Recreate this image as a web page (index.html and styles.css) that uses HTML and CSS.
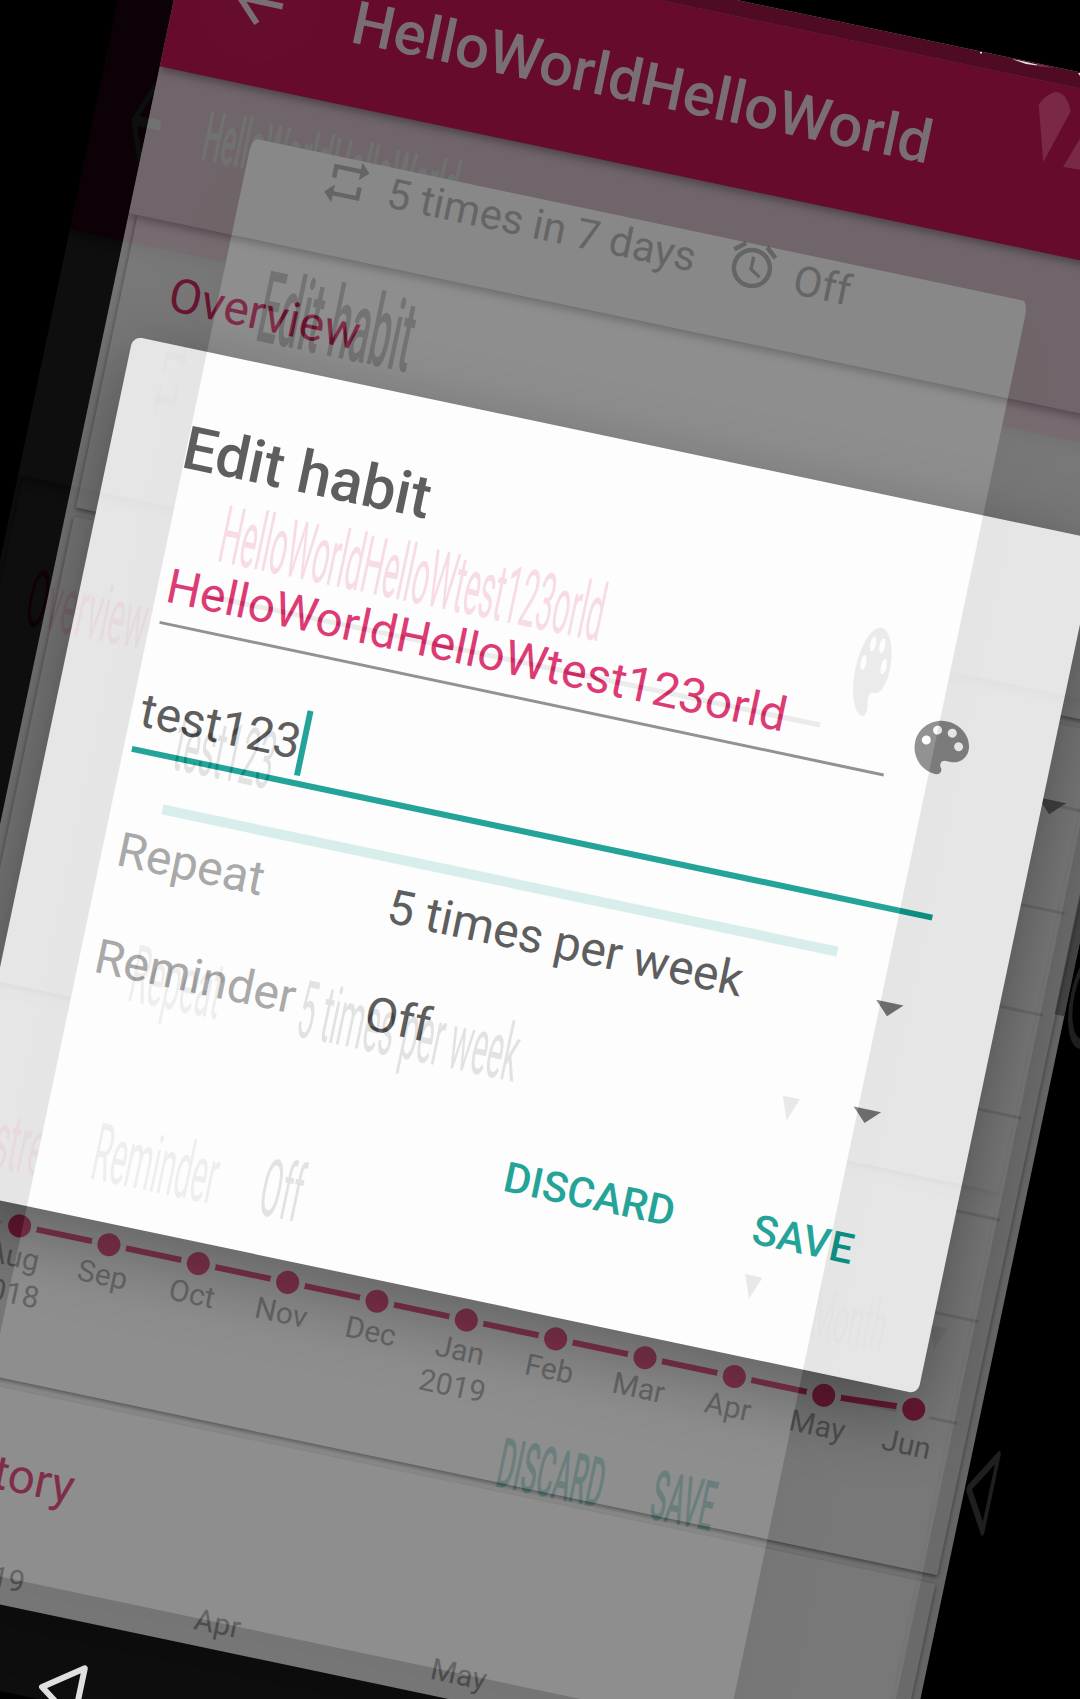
FILE: index.html
```html
<!DOCTYPE html>
<html lang="en">
<head>
<meta charset="utf-8">
<title>Edit habit</title>
<link rel="stylesheet" href="styles.css">
</head>
<body>
<svg class="defs" width="0" height="0" aria-hidden="true">
  <symbol id="back" viewBox="0 0 24 24"><path d="M20 11H7.83l5.59-5.59L12 4l-8 8 8 8 1.41-1.41L7.83 13H20v-2z"/></symbol>
  <symbol id="repeat" viewBox="0 0 24 24"><path d="M7 7h10v3l4-4-4-4v3H5v6h2V7zm10 10H7v-3l-4 4 4 4v-3h12v-6h-2v4z"/></symbol>
  <symbol id="alarm" viewBox="0 0 24 24"><path d="M22 5.72l-4.6-3.86-1.29 1.53 4.6 3.86L22 5.72zM7.88 3.39L6.6 1.86 2 5.71l1.29 1.53 4.59-3.85zM12.5 8H11v6l4.75 2.85.75-1.23-4-2.37V8zM12 4c-4.97 0-9 4.03-9 9s4.02 9 9 9c4.97 0 9-4.03 9-9s-4.03-9-9-9zm0 16c-3.87 0-7-3.13-7-7s3.13-7 7-7 7 3.13 7 7-3.13 7-7 7z"/></symbol>
  <symbol id="palette" viewBox="0 0 24 24"><path d="M12 3c-4.97 0-9 4.03-9 9s4.03 9 9 9c.83 0 1.5-.67 1.5-1.5 0-.39-.15-.74-.39-1.01-.23-.26-.38-.61-.38-.99 0-.83.67-1.5 1.5-1.5H16c2.76 0 5-2.24 5-5 0-4.42-4.03-8-9-8zm-5.5 9c-.83 0-1.5-.67-1.5-1.5S5.67 9 6.5 9 8 9.67 8 10.5 7.33 12 6.5 12zm3-4C8.67 8 8 7.33 8 6.5S8.67 5 9.5 5s1.5.67 1.5 1.5S10.33 8 9.5 8zm5 0c-.83 0-1.5-.67-1.5-1.5S13.67 5 14.5 5s1.5.67 1.5 1.5S15.33 8 14.5 8zm3 4c-.83 0-1.5-.67-1.5-1.5S16.67 9 17.5 9s1.5.67 1.5 1.5-.67 1.5-1.5 1.5z"/></symbol>
</svg>

<main class="stage">
  <section class="screen portrait">
    <div class="statusbar"></div>
    <header class="toolbar">
      <span class="halo"><svg class="i72"><use href="#back"/></svg></span>
      <h1>HelloWorldHelloWorld</h1>
    </header>
    <div class="subheader">
      <svg class="i54"><use href="#repeat"/></svg><span class="freq">5 times in 7 days</span>
      <svg class="i54"><use href="#alarm"/></svg><span>Off</span>
    </div>
    <article class="card overview"><h2>Overview</h2></article>
    <article class="card strength">
      <svg class="chart" width="1062" height="858" viewBox="0 0 1062 858">
        <path class="rule" d="M40 80.500H1051M40 184.500H1051M40 288.500H1051M40 393.500H1051M40 497.500H1051M40 601.500H1051M40 705.500H1051"/>
        <path class="caret" d="M1001 76h29l-14.500 14.500z"/>
        <path class="line" d="M93 705.500L914.700 705.500L1005.700 700"/>
        <g class="dots">
          <circle cx="93" cy="705.500" r="14.500"/><circle cx="184.300" cy="705.500" r="14.500"/><circle cx="275.600" cy="705.500" r="14.500"/><circle cx="366.900" cy="705.500" r="14.500"/><circle cx="458.200" cy="705.500" r="14.500"/><circle cx="549.500" cy="705.500" r="14.500"/><circle cx="640.800" cy="705.500" r="14.500"/><circle cx="732.100" cy="705.500" r="14.500"/><circle cx="823.400" cy="705.500" r="14.500"/><circle cx="914.700" cy="705.500" r="14.500"/><circle cx="1005.700" cy="700.500" r="14.500"/>
        </g>
        <g class="axis">
          <text x="93" y="746.500">Aug</text><text x="93" y="783">2018</text><text x="184.300" y="746.500">Sep</text><text x="275.600" y="746.500">Oct</text><text x="366.900" y="746.500">Nov</text><text x="458.200" y="746.500">Dec</text><text x="549.500" y="746.500">Jan</text><text x="549.500" y="783">2019</text><text x="640.800" y="746.500">Feb</text><text x="732.100" y="746.500">Mar</text><text x="823.400" y="746.500">Apr</text><text x="914.700" y="746.500">May</text><text x="1005.700" y="746.500">Jun</text>
        </g>
      </svg>
    </article>
    <article class="card history">
      <h2>History</h2>
      <div class="months"><span>2019</span><span>Apr</span><span>May</span></div>
      <div class="cells"></div>
    </article>
    <nav class="navbar">
      <svg width="60" height="70" viewBox="0 0 60 70"><path d="M8 35L46 8v54z"/></svg>
    </nav>
    <i class="scrollbar"></i>
  </section>

  <section class="dialog front">
    <h2>Edit habit</h2>
    <div class="name"><span>HelloWorldHelloWtest123orld</span><svg class="i72"><use href="#palette"/></svg></div>
    <div class="note"><span>test123</span><i></i></div>
    <div class="row"><label>Repeat</label><span>5 times per week</span><b></b></div>
    <div class="row"><label>Reminder</label><span>Off</span><b></b></div>
    <footer><span>DISCARD</span><span>SAVE</span></footer>
  </section>

  <svg class="pencil" width="48" height="90" viewBox="0 0 48 90"><path d="M6.700 24.500C15 14 21 12 25 12c7 1 12 9 13.700 19.500L11.300 82zM31 87L49 57v33z"/></svg>
  <svg class="notices" width="120" height="40" viewBox="0 0 120 40"><path d="M52 19l12 2.500 13 3v1l-11-1.500z"/><path class="dim" d="M77 24l17 4-16-2z"/><path d="M20 12h2v1.500h-2zM118 33h2v3z"/></svg>

  <section class="screen landscape">
    <div class="content">
      <header class="toolbar">
        <span class="halo"><svg class="i72"><use href="#back"/></svg></span>
        <h1>HelloWorldHelloWorld</h1>
      </header>
      <div class="subheader"><svg class="i54"><use href="#repeat"/></svg></div>
      <article class="card overview"><h2>Overview</h2></article>
      <article class="card strength"><h2>Habit strength</h2><span class="unit">Month</span><b></b></article>
    </div>
    <nav class="sidebar">
      <svg width="144" height="1080" viewBox="0 0 144 1080"><circle cx="72" cy="540" r="28"/><path d="M44 842L80 819v46z"/></svg>
    </nav>
    <div class="dialog back">
      <h2>Edit habit</h2>
      <div class="name"><span>HelloWorldHelloWtest123orld</span><svg class="i72"><use href="#palette"/></svg></div>
      <div class="note"><span>test123</span></div>
      <div class="row"><label>Repeat</label><span>5 times per week</span><b></b></div>
      <div class="row"><label>Reminder</label><span>Off</span><b></b></div>
      <footer><span>DISCARD</span><span>SAVE</span></footer>
    </div>
  </section>
</main>
</body>
</html>
```

FILE: styles.css
```css
* { box-sizing: border-box; }
body { margin: 0; background: #000; font-family: Roboto, "Liberation Sans", sans-serif; }
h1, h2 { margin: 0; font-weight: 500; }
.defs { position: absolute; }
.stage { position: relative; width: 1080px; height: 1699px; overflow: hidden; background: #000; }
.i72 { width: 72px; height: 72px; flex: none; fill: currentColor; }
.i54 { width: 54px; height: 54px; flex: none; fill: currentColor; }

/* Screens: two orientations overlaid while the device rotates */
.screen { position: absolute; left: 0; top: 0; display: flex; transform-origin: 0 0; overflow: hidden; }
.portrait { width: 1080.5px; height: 1930px; flex-direction: column; background: #777; transform: rotate(11.9deg) translate(170px, -152px); }
.landscape { width: 1920px; height: 1080px; background: #000; opacity: .14; transform: rotate(11.9deg) translate(115.5px, -151px) scale(.626, 1.672); }
.content { width: 1776px; height: 1080px; display: flex; flex-direction: column; overflow: hidden; background: #5c5c5c; }

.statusbar { height: 16px; background: #4e0b23; flex: none; position: relative; z-index: 3; }
.toolbar { display: flex; align-items: center; flex: none; height: 168px; background: #690c2c; color: #808080; box-shadow: 0 3px 10px rgba(0,0,0,.4); z-index: 2; }
.toolbar h1 { font-size: 60px; }
.halo { width: 120px; height: 120px; margin-left: 24px; margin-right: 36px; border-radius: 50%; display: grid; place-items: center; background: rgba(255,255,255,.012); }
.subheader { display: flex; align-items: center; flex: none; height: 150px; padding-left: 180px; font-size: 42px; background: #757575; color: #4c4c4c; box-shadow: 0 3px 10px rgba(0,0,0,.35); z-index: 1; }
.subheader span { margin-left: 16.5px; line-height: 60px; margin-top: 5px; white-space: nowrap; }
.subheader .freq { width: 314px; margin-left: 15px; margin-right: 31px; margin-top: 3px; }
.subheader .freq + svg { margin-top: -5px; }
.card { flex: none; margin: 0 8.5px 9px; background: #7c7c7c; box-shadow: 0 2px 4px rgba(0,0,0,.5); overflow: hidden; }
.card h2 { font-size: 48px; font-weight: 400; line-height: 60px; color: #6b0a2b; margin-left: 48px; }
.overview { height: 299px; padding-top: 41px; }
.strength { height: 858px; display: flex; }
.history { height: 230px; padding-top: 53.5px; margin-bottom: 0; display: flex; flex-direction: column; }
.months { display: flex; font-size: 30px; line-height: 40px; color: #4b4b4b; padding-left: 104.5px; margin-top: 53.5px; }
.months span { width: 241.5px; }
.cells { height: 20px; margin: 9px 6px 0; background: repeating-linear-gradient(90deg, #727272 0 57px, #7c7c7c 57px 60px); }

.chart { display: block; flex: none; }
.rule { stroke: #6b6b6b; stroke-width: 3; fill: none; }
.caret { fill: #3c3c3c; }
.line { stroke: #6b0a2b; stroke-width: 6; fill: none; }
.dots circle { fill: #6b0a2b; stroke: #7c7c7c; stroke-width: 6; }
.axis text { font-size: 30px; text-anchor: middle; fill: #4b4b4b; }

.navbar { position: absolute; left: 0; right: 0; top: 1721.5px; height: 210px; background: #000; padding: 37px 0 0 211px; }
.navbar path { fill: none; stroke: #f5f5f5; stroke-width: 6; stroke-linejoin: round; }
.scrollbar { position: absolute; right: 0; top: 700px; width: 10px; height: 227px; background: rgba(0,0,0,.33); }

/* Dialog */
.dialog { position: absolute; height: 873px; display: flex; flex-direction: column; background: #fdfdfd; color: #444; border-radius: 9px; font-size: 48px; box-shadow: 0 24px 72px rgba(0,0,0,.42); }
.front { --field-end: 161px; --icon-gap: 15px; --label: 91px; --value: 276px; left: 0; top: 0; width: 986px; transform-origin: 0 0; transform: rotate(11.9deg) translate(199.5px, 301.6px); }
.back { --field-end: 186px; --icon-gap: 28px; --label: 87px; --value: 274px; left: 255px; top: 139.5px; width: 1267px; z-index: 4; letter-spacing: -.3px; box-shadow: 0 24px 72px rgba(0,0,0,.2); }
.dialog h2 { font-size: 60px; line-height: 75px; margin: 60px 0 0 72.5px; }
.name { display: flex; align-items: center; height: 78px; margin: 62.5px 0 0 85px; color: #818181; }
.name span { flex: none; width: calc(100% - var(--field-end)); height: 78px; line-height: 78px; color: #d81b60; border-bottom: 3px solid #818181; }
.name svg { margin: -1px 0 0 var(--icon-gap); }
.note { display: flex; align-items: center; height: 86px; line-height: 86px; margin: 45.5px 84px 0 84px; border-bottom: 6px solid #009688; }
.note span { margin: 5px 0 0 1px; }
.note i { width: 6px; height: 66px; margin-top: 4px; background: #009688; }
.row { display: flex; align-items: center; height: 109px; padding: 0 94px 0 var(--label); }
.note + .row { margin-top: 42.5px; }
.row label { width: var(--value); color: #9b9b9b; }
.row b, .strength b { margin: -3px 0 0 auto; border: 14.5px solid transparent; border-top-color: #707070; border-bottom: 0; }
.dialog footer { display: flex; justify-content: flex-end; gap: 80px; height: 100px; line-height: 100px; margin-top: 28px; padding-right: 93px; font-size: 42px; font-weight: 500; color: #009688; }

/* Landscape variations */
.landscape .toolbar { height: 216px; padding-top: 72px; background: #55082a; color: #5a6462; }
.landscape .toolbar h1 { font-size: 42px; }
.landscape .subheader, .landscape .card { background: #626262; }
.landscape .strength { align-items: flex-start; }
.landscape .strength h2 { margin-top: 54px; }
.unit { margin: 60px 67px 0 auto; font-size: 42px; line-height: 50px; color: #4c4c4c; }
.landscape .strength b { margin: 77px 34px 0 0; border-top-color: #333; }
.sidebar { width: 144px; height: 1080px; background: #000; }
.sidebar svg { display: block; fill: none; stroke: #ddd; stroke-width: 6; stroke-linejoin: round; }
.back h2 { margin-left: 69px; }
.back .name { margin-left: 82.5px; }
.back .note { margin-left: 81px; }
.back .note span { margin-left: -1px; }
.back footer { gap: 79px; }

.pencil { position: absolute; left: 1032px; top: 80px; fill: #802f4a; }
.notices { position: absolute; left: 960px; top: 40px; fill: #fff; }
.notices .dim { fill: #8a4a60; }
```
